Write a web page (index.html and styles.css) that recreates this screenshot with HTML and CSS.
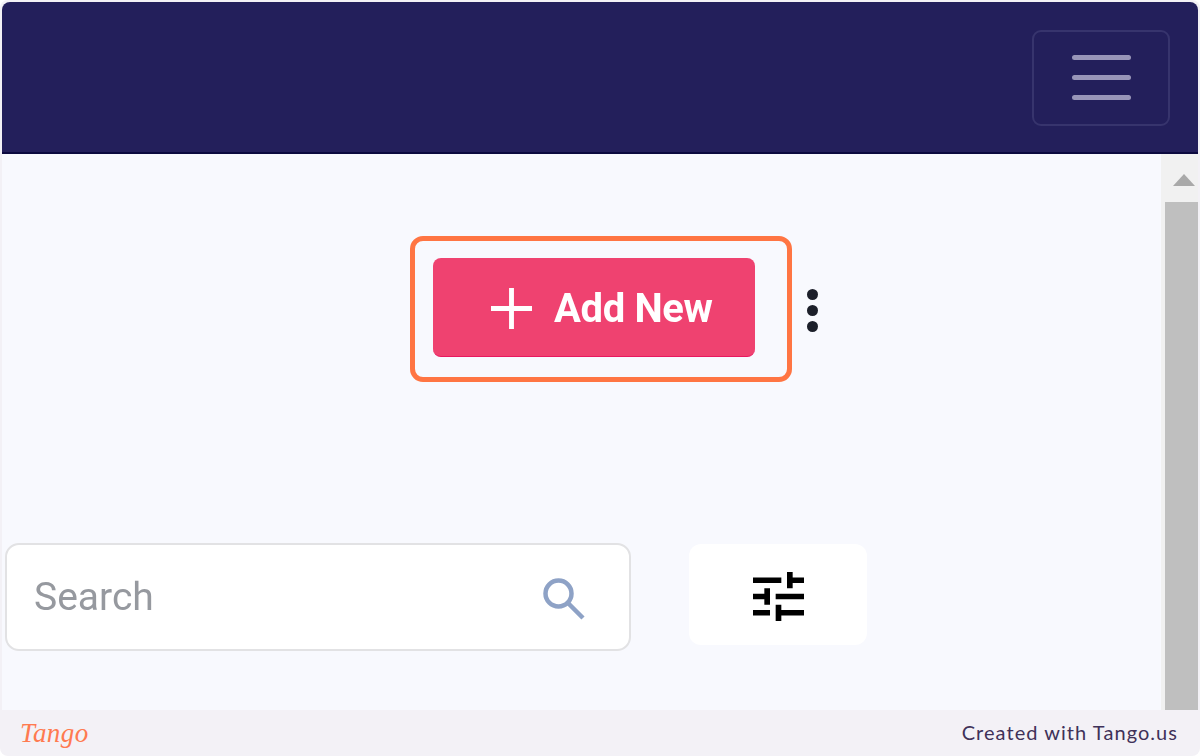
FILE: index.html
```html
<!DOCTYPE html>
<html lang="en">
<head>
<meta charset="utf-8">
<title>Add New</title>
<link rel="stylesheet" href="styles.css">
</head>
<body>
<div class="frame">
  <header class="topbar">
    <button class="menu-btn" type="button" aria-label="Menu">
      <span class="menu-line"></span>
      <span class="menu-line"></span>
      <span class="menu-line"></span>
    </button>
  </header>
  <div class="viewport">
    <main class="content">
      <div class="actions">
        <div class="add-wrap">
          <button class="add-btn" type="button">
            <svg class="plus-icon" viewBox="0 0 42 42" aria-hidden="true"><path d="M21 0v42M0 21h42"/></svg>
            <span class="add-label">Add New</span>
          </button>
          <span class="highlight"></span>
        </div>
        <div class="kebab"><i></i><i></i><i></i></div>
      </div>
      <div class="filters">
        <div class="search">
          <span class="search-text">Search</span>
          <svg class="search-icon" viewBox="0 0 42 42" aria-hidden="true"><circle cx="15.5" cy="15.5" r="13"/><path d="M25 25l15 15"/></svg>
        </div>
        <button class="filter-btn" type="button" aria-label="Filter">
          <svg class="tune-icon" viewBox="3 3 18 18" preserveAspectRatio="none" aria-hidden="true"><path d="M3 17v2h6v-2H3zM3 5v2h10V5H3zm10 16v-2h8v-2h-8v-2h-2v6h2zM7 9v2H3v2h4v2h2V9H7zm14 4v-2H11v2h10zm-6-4h2V7h4V5h-4V3h-2v6z"/></svg>
        </button>
      </div>
    </main>
    <aside class="scrollbar">
      <span class="arrow"></span>
      <span class="thumb"></span>
    </aside>
  </div>
</div>
<footer class="footer">
  <span class="logo">Tango</span>
  <span class="credit">Created with Tango.us</span>
</footer>
</body>
</html>
```
FILE: styles.css
```css
* { box-sizing: border-box; }
html { background: #fff; height: 100%; }
body {
  margin: 0;
  width: 1200px;
  height: 756px;
  overflow: hidden;
  display: flex;
  flex-direction: column;
  background: #f3f1f6;
  border-radius: 8px;
  font-family: Roboto, "Liberation Sans", sans-serif;
}
button { font: inherit; cursor: pointer; }

.frame {
  flex: 1;
  min-height: 0;
  margin: 2px 2px 0;
  display: flex;
  flex-direction: column;
  border-radius: 8px 8px 0 0;
  overflow: hidden;
}

.topbar {
  height: 152px;
  flex: none;
  display: flex;
  justify-content: flex-end;
  align-items: flex-start;
  padding: 28px 28px 0 0;
  background: #231f5b;
  border-bottom: 2px solid #0c0a3f;
}
.menu-btn {
  width: 138px;
  height: 96px;
  display: flex;
  flex-direction: column;
  align-items: center;
  justify-content: center;
  gap: 15px;
  padding: 0 0 2px;
  background: transparent;
  border: 2px solid #37346d;
  border-radius: 9px;
  filter: blur(0.4px);
}
.menu-line {
  width: 59px;
  height: 5px;
  border-radius: 3px;
  background: #9895b8;
}

.viewport {
  flex: 1;
  min-height: 0;
  display: flex;
  background: #f8f9fe;
}
.content {
  flex: 1;
  padding: 104px 0 0 3px;
}
.actions {
  display: flex;
  align-items: center;
  padding-left: 428px;
  gap: 52px;
}
.add-wrap { position: relative; }
.add-btn {
  width: 322px;
  height: 99px;
  display: flex;
  align-items: center;
  gap: 22px;
  padding: 0 0 0 58px;
  background: #ef4270;
  border: 0;
  border-bottom: 1px solid #e8185f;
  border-radius: 8px;
  color: #fff;
  font-size: 40px;
  font-weight: 700;
  letter-spacing: -0.35px;
  filter: blur(0.4px);
}
.add-label { padding-top: 2px; }
.plus-icon {
  width: 41px;
  height: 41px;
  margin-top: 2px;
  fill: none;
  stroke: #fff;
  stroke-width: 5;
}
.highlight {
  position: absolute;
  left: -23px;
  top: -22px;
  width: 382px;
  height: 146px;
  border: 5px solid #ff7543;
  border-radius: 13px;
}
.kebab {
  display: flex;
  flex-direction: column;
  gap: 5px;
  padding-top: 5px;
  filter: blur(0.3px);
}
.kebab i {
  display: block;
  width: 11px;
  height: 11px;
  border-radius: 50%;
  background: #1c1f2a;
}

.filters {
  display: flex;
  align-items: flex-start;
  gap: 58px;
  margin-top: 186px;
}
.search {
  width: 626px;
  height: 108px;
  display: flex;
  align-items: center;
  justify-content: space-between;
  padding: 0 44px 0 27px;
  background: #fff;
  border: 2px solid #e2e2e4;
  border-radius: 14px;
  filter: blur(0.4px);
}
.search-text {
  color: #96999f;
  font-size: 39px;
}
.search-icon {
  width: 42px;
  height: 42px;
  margin-top: 4px;
  fill: none;
  stroke: #8ea2c6;
  stroke-width: 4.5;
}
.filter-btn {
  width: 178px;
  height: 101px;
  margin-top: 1px;
  display: flex;
  align-items: center;
  justify-content: center;
  padding: 3px 0 0;
  background: #fff;
  border: 0;
  border-radius: 12px;
  filter: blur(0.4px);
}
.tune-icon {
  width: 51px;
  height: 49px;
  fill: #000;
}

.scrollbar {
  width: 37px;
  flex: none;
  display: flex;
  flex-direction: column;
  align-items: flex-end;
  background: #f1f1f1;
}
.arrow {
  margin: 20px 3px 0 0;
  width: 0;
  height: 0;
  border-left: 11px solid transparent;
  border-right: 11px solid transparent;
  border-bottom: 12px solid #a9a9a9;
}
.thumb {
  flex: 1;
  width: 33px;
  margin-top: 16px;
  background: #bfbfbf;
}

.footer {
  flex: none;
  height: 46px;
  display: flex;
  align-items: center;
  justify-content: space-between;
  padding: 0 22px 0 20px;
}
.logo {
  font-family: "Liberation Serif", serif;
  font-style: italic;
  font-size: 27px;
  color: #ff7a50;
  letter-spacing: 0.4px;
}
.credit {
  font-family: Lato, sans-serif;
  font-size: 20px;
  letter-spacing: 1.05px;
  color: #3f3159;
  margin-top: -2px;
}
```
